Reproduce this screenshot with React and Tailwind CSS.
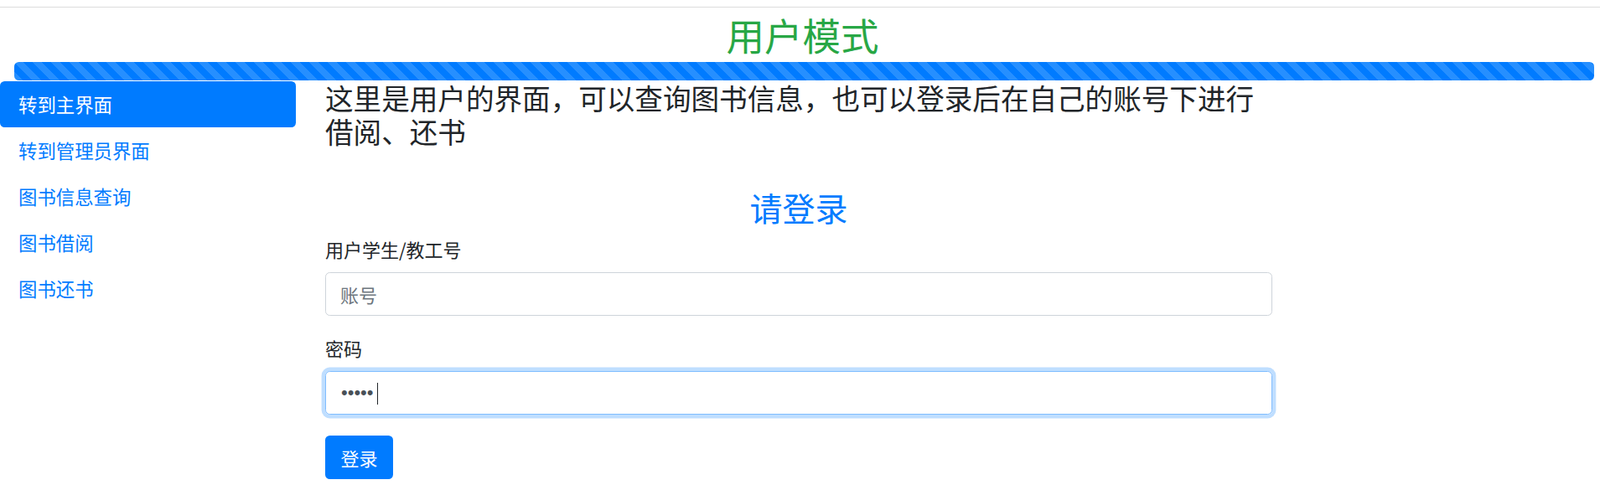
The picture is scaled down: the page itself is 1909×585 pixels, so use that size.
import React from "react";

const navItems = ["转到主界面", "转到管理员界面", "图书信息查询", "图书借阅", "图书还书"];

export default function App() {
  return (
    <div
      className="w-[1909px] h-[585px] overflow-hidden bg-white text-[#212529]"
      style={{ fontFamily: '"Noto Sans CJK SC", "Noto Sans", "Liberation Sans", sans-serif' }}
    >
      <div className="mt-[8px] h-px bg-[#dcdcdc]" />
      <h2 className="mt-[5px] pl-[6px] text-center text-[45.5px] leading-[54px] font-normal text-[#28a745]">用户模式</h2>
      <div className="mt-[6px] ml-[17px] mr-[7px] h-[22px] rounded-[5.5px] overflow-hidden bg-[#007bff] bg-[linear-gradient(45deg,rgba(255,255,255,.15)_25%,transparent_25%,transparent_50%,rgba(255,255,255,.15)_50%,rgba(255,255,255,.15)_75%,transparent_75%,transparent)] bg-[length:22px_22px]" />
      <div className="flex mt-[1px]">
        <nav className="w-[353px] flex flex-col">
          {navItems.map((t, i) => (
            <a
              key={t}
              href="#"
              className={
                i === 0
                  ? "block px-[22px] py-[11px] text-[22.4px] leading-[33px] rounded-[5.5px] bg-[#007bff] text-white"
                  : "block px-[22px] py-[11px] text-[22.4px] leading-[33px] text-[#007bff]"
              }
            >
              {t}
            </a>
          ))}
        </nav>
        <div className="ml-[35px] w-[1130px]">
          <h4 className="max-w-[1120px] text-[33.6px] leading-[40px] font-normal">
            这里是用户的界面，可以查询图书信息，也可以登录后在自己的账号下进行借阅、还书
          </h4>
          <h3 className="mt-[47px] mb-[11px] text-center text-[39px] leading-[46px] font-normal text-[#007bff]">请登录</h3>
          <form onSubmit={(e) => e.preventDefault()}>
            <div className="mb-[22px]">
              <label className="block mb-[11px] text-[22px] leading-[33px]">用户学生/教工号</label>
              <input
                type="text"
                placeholder="账号"
                className="block w-full h-[52px] px-[17px] border border-[#ced4da] rounded-[5.5px] text-[22px] text-[#495057] placeholder:text-[#6c757d] outline-none"
              />
            </div>
            <div className="mb-[25px]">
              <label className="block mb-[11px] text-[22px] leading-[33px]">密码</label>
              <div className="relative">
                <input
                  type="password"
                  defaultValue="12345"
                  className="block w-full h-[52px] pl-[18px] pr-[17px] border border-[#80bdff] rounded-[5.5px] text-[22px] text-[#495057] outline-none shadow-[0_0_0_4.4px_rgba(0,123,255,.25)] caret-transparent"
                  style={{ fontFamily: '"Liberation Sans", Arial, sans-serif' }}
                />
                <span className="pointer-events-none absolute left-[62px] top-[14px] h-[26px] w-px bg-[#212529]" />
              </div>
            </div>
            <button
              type="submit"
              className="h-[52px] px-[18.5px] rounded-[5.5px] bg-[#007bff] text-white text-[22px] leading-[33px]"
            >
              登录
            </button>
          </form>
        </div>
      </div>
    </div>
  );
}
